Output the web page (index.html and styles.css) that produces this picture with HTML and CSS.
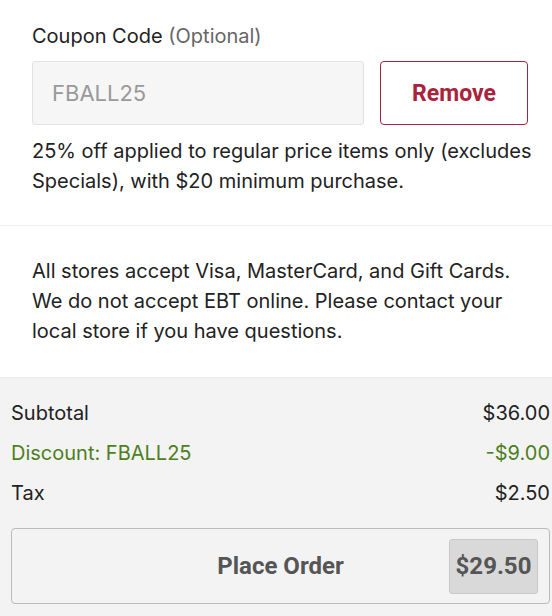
FILE: index.html
```html
<!DOCTYPE html>
<html lang="en">
<head>
  <meta charset="UTF-8">
  <meta name="viewport" content="width=device-width, initial-scale=1.0">
  <title>Checkout</title>
  <link rel="stylesheet" href="styles.css">
</head>
<body>
  <section class="coupon">
    <label for="coupon">Coupon Code <span class="muted">(Optional)</span></label>
    <div class="coupon-row">
      <input id="coupon" type="text" value="FBALL25" disabled>
      <button class="remove">Remove</button>
    </div>
    <p>25% off applied to regular price items only (excludes Specials), with $20 minimum purchase.</p>
  </section>

  <section class="notice">
    <p>All stores accept Visa, MasterCard, and Gift Cards. We do not accept EBT online. Please contact your local store if you have questions.</p>
  </section>

  <section class="totals">
    <div class="line">
      <span>Subtotal</span>
      <span>$36.00</span>
    </div>
    <div class="line discount">
      <span>Discount: FBALL25</span>
      <span>-$9.00</span>
    </div>
    <div class="line">
      <span>Tax</span>
      <span>$2.50</span>
    </div>
    <button class="place-order">
      <span class="label">Place Order</span>
      <span class="price">$29.50</span>
    </button>
  </section>
</body>
</html>
```

FILE: styles.css
```css
body {
  font-family: Inter, "Noto Sans", sans-serif;
  margin: 0;
  padding: 0;
  background-color: #fff;
  color: #222;
  font-size: 20px;
}
p {
  margin: 0;
  line-height: 30px;
}
.coupon {
  padding: 21px 24px 29px 32px;
  border-bottom: 1px solid #eee;
}
.coupon label {
  display: block;
  line-height: 30px;
  margin-bottom: 10px;
}
.coupon p {
  margin-right: -16px;
}
.muted {
  color: #666;
}
.coupon-row {
  display: flex;
  gap: 16px;
  margin-bottom: 11px;
}
.coupon-row input {
  flex: 1;
  height: 64px;
  box-sizing: border-box;
  border: 1px solid #e2e2e4;
  border-radius: 3px;
  background: #f6f6f7;
  padding: 0 19px;
  font-family: Inter, "Noto Sans", sans-serif;
  font-size: 22px;
  color: #999;
  min-width: 0;
}
.remove {
  width: 148px;
  height: 64px;
  background: #fff;
  border: 1px solid #a8233b;
  border-radius: 4px;
  color: #a8233b;
  font-family: Roboto, Arial, sans-serif;
  font-weight: 700;
  font-size: 23px;
  cursor: pointer;
}
.notice {
  padding: 30px 24px 31px 32px;
}
.totals {
  background: #f3f3f3;
  border-top: 1px solid #e8e8e8;
  padding: 15px 2px 13px 11px;
}
.line {
  display: flex;
  justify-content: space-between;
  line-height: 40px;
}
.discount {
  color: #4d7f1f;
}
.place-order {
  margin-top: 15px;
  width: 100%;
  height: 76px;
  display: flex;
  align-items: center;
  background: #f3f3f3;
  border: 1px solid #bbb;
  border-radius: 4px;
  padding: 0 11px 0 0;
  font-family: Roboto, Arial, sans-serif;
  font-weight: 700;
  font-size: 24px;
  color: #555;
  cursor: pointer;
}
.place-order .label {
  flex: 1;
  text-align: center;
  padding-left: 100px;
}
.place-order .price {
  width: 87px;
  height: 53px;
  line-height: 53px;
  background: #d9d9d9;
  border: 1px solid #c8c8c8;
  border-radius: 3px;
}
```
